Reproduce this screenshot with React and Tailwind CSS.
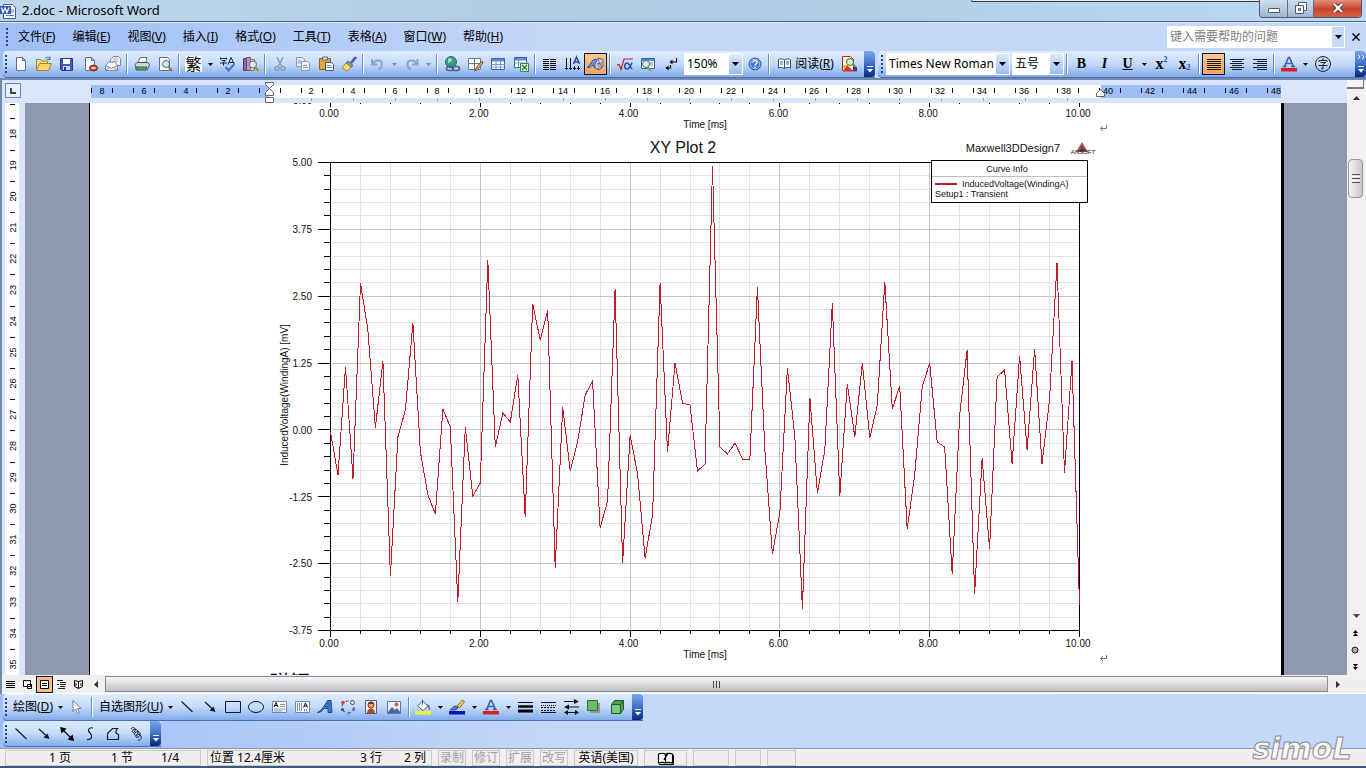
import React from "react";

const UI = "font-['Noto_Sans','Noto_Sans_CJK_SC',sans-serif]";

/* ---------- shared pieces ---------- */

function Icon({ children, className = "" }) {
  return (
    <svg width="18" height="18" viewBox="0 0 18 18" fill="none" className={"shrink-0 " + className} aria-hidden="true">
      {children}
    </svg>
  );
}

function Tool({ label, on, children }) {
  return (
    <button
      type="button"
      aria-label={label}
      aria-pressed={on}
      className={
        "flex h-[22px] w-[23px] shrink-0 items-center justify-center " +
        (on ? "border border-[#10104a] bg-gradient-to-b from-[#fbc98c] to-[#f0a75a]" : "")
      }
    >
      {children}
    </button>
  );
}

function Drop({ label, dim }) {
  return (
    <button type="button" aria-label={label} className="flex h-[22px] w-[11px] shrink-0 items-center justify-center">
      <svg width="5" height="3" viewBox="0 0 5 3" aria-hidden="true">
        <path d="M0 0h5L2.500 3z" fill={dim ? "#7f93b8" : "#000"} />
      </svg>
    </button>
  );
}

function Sep() {
  return (
    <span className="flex w-[6px] shrink-0 justify-center">
      <span className="h-5 w-px bg-[#6a8ccb]" />
      <span className="h-5 w-px bg-white" />
    </span>
  );
}

function Grip({ rows = 5 }) {
  return (
    <span className="flex w-[6px] shrink-0 flex-col items-center gap-[2px]">
      {Array.from({ length: rows }, (_, i) => (
        <span key={i} className="h-[2px] w-[2px] bg-[#27418a]" />
      ))}
    </span>
  );
}

function Cap({ label, more }) {
  return (
    <button
      type="button"
      aria-label={label}
      className="flex w-[11px] shrink-0 flex-col items-center justify-end self-stretch rounded-r-sm bg-gradient-to-b from-[#7ba6ee] via-[#3f6fc8] to-[#08287c] pb-1"
    >
      <svg width="8" height={more ? 19 : 7} viewBox={more ? "0 -12 8 19" : "0 0 8 7"} aria-hidden="true">
        {more && <path d="M1 -11l2 2-2 2M5 -11l2 2-2 2" stroke="#fff" fill="none" />}
        <path d="M1 .5h6" stroke="#fff" />
        <path d="M1 3h6L4 6.500z" fill="#fff" />
      </svg>
    </button>
  );
}

function Bar({ children, className = "" }) {
  return (
    <div
      className={
        "flex items-center rounded-l border-b border-[#4a70b8] bg-gradient-to-b from-[#dfecff] via-[#c3daf9] to-[#83abe9] " +
        className
      }
    >
      {children}
    </div>
  );
}

function Combo({ label, value, box }) {
  return (
    <span className={"flex h-[22px] shrink-0 bg-white " + box}>
      <select
        aria-label={label}
        className="min-w-0 flex-1 appearance-none overflow-hidden bg-white pl-[3px] text-xs text-black outline-none"
      >
        <option>{value}</option>
      </select>
      <span className="my-px mr-px flex w-[13px] shrink-0 items-center justify-center bg-gradient-to-b from-[#dce9fd] to-[#9dbff0]">
        <svg width="7" height="4" viewBox="0 0 7 4" aria-hidden="true">
          <path d="M0 0h7L3.500 4z" />
        </svg>
      </span>
    </span>
  );
}

/* ---------- icon drawings ---------- */

const page = <path d="M4.500 2.500h6l3 3v10h-9z M10.500 2.500v3h3" fill="#fff" stroke="#5c6f94" />;

const icons = {
  fresh: <Icon>{page}</Icon>,
  open: (
    <Icon>
      <path d="M1.500 15.500v-11h4l1 1.500h6v2" fill="#f7e08a" stroke="#a8842c" />
      <path d="M1.500 15.500l3-7h12l-3 7z" fill="#fbd768" stroke="#a8842c" />
      <path d="M10 3.500c2-2 4-1.500 5 .5m0-2.500v3h-3" stroke="#42618f" />
    </Icon>
  ),
  save: (
    <Icon>
      <path d="M2.500 3.500h12v12h-11l-1-1z" fill="#4659b8" stroke="#2b3a8f" />
      <path d="M5 4h7v5H5z" fill="#fff" />
      <path d="M5 11h7v4H5z" fill="#cfd6e8" />
      <path d="M6 12h2v3H6z" fill="#25307a" />
    </Icon>
  ),
  perm: (
    <Icon>
      {page}
      <ellipse cx="12.500" cy="13" rx="4" ry="3" fill="#c8452e" stroke="#8d2416" />
      <path d="M10.500 13h4" stroke="#fff" strokeWidth="1.500" />
    </Icon>
  ),
  mail: (
    <Icon>
      <path d="M6.500 7V4.500l3-3h5l2 2v7h-3" fill="#fff" stroke="#7a86a0" />
      <path d="M9 4h5M8.500 6h6" stroke="#9aa6bc" />
      <path d="M1.500 10.500l3-3.500h7l2 3.500v5h-12z" fill="#f2f4f8" stroke="#7a86a0" />
      <path d="M1.500 10.500l6 3 6-3M1.500 15.500l4-3M13.500 15.500l-4-3" stroke="#7a86a0" />
    </Icon>
  ),
  print: (
    <Icon>
      <path d="M5 8l2-5.500h7L12.500 8" fill="#fff" stroke="#5d6b80" />
      <path d="M2 9.500l2-2h11l1.500 2-2 5h-11z" fill="#cfd5dc" stroke="#46545f" />
      <path d="M3 12h11l-1 3H3z" fill="#4fa66a" stroke="#2f6a45" />
    </Icon>
  ),
  preview: (
    <Icon>
      <path d="M3.500 2.500h8l2 2v11h-10z" fill="#fff" stroke="#5c6f94" />
      <circle cx="10" cy="9" r="3.500" fill="#cfeaf5" stroke="#4c6a8c" />
      <path d="M12.500 12l3.500 4" stroke="#9a7a2c" strokeWidth="2" />
    </Icon>
  ),
  spell: (
    <Icon>
      <path d="M1 3.500h7M1.500 2.500v2M7.500 2.500v2M2.500 5.500h4l-2 1.500v3.500M1 8h7" stroke="#10204a" />
      <path d="M9 9.500l3-7 3.500 7M10 7.500h4.500" stroke="#10204a" />
      <path d="M6.500 12l3 3.500L15 9.500" stroke="#3c6fd0" strokeWidth="2" />
    </Icon>
  ),
  research: (
    <Icon>
      <path d="M1.500 3.500h3v12h-3z" fill="#8467b8" stroke="#4b3a80" />
      <path d="M4.500 2.500h4v13h-4z" fill="#c58ac0" stroke="#6a4a80" />
      <path d="M8.500 4.500h4v11h-4z" fill="#ecd795" stroke="#8d7a40" />
      <circle cx="11" cy="9.500" r="3.500" fill="#dceefa" stroke="#4c6a8c" />
      <path d="M13.500 12.500l3 3.500" stroke="#b8862c" strokeWidth="2" />
    </Icon>
  ),
  cut: (
    <Icon>
      <path d="M6 2l4.500 9M12 2L7.500 11" stroke="#8c9ab8" strokeWidth="1.500" />
      <circle cx="6" cy="13.500" r="2" stroke="#8c9ab8" strokeWidth="1.500" />
      <circle cx="12" cy="13.500" r="2" stroke="#8c9ab8" strokeWidth="1.500" />
    </Icon>
  ),
  copy: (
    <Icon>
      <path d="M2.500 2.500h6l2 2v7h-8z" fill="#e4ebf8" stroke="#8c9ab8" />
      <path d="M7.500 6.500h6l2 2v7h-8z" fill="#eef3fb" stroke="#8c9ab8" />
      <path d="M4 6h3M4 8h3M9 10.500h4M9 12.500h5" stroke="#8c9ab8" />
    </Icon>
  ),
  paste: (
    <Icon>
      <path d="M2.500 3.500h11v11h-11z" fill="#e0a83c" stroke="#8d6518" />
      <path d="M5.500 2h5v3h-5z" fill="#d9dde6" stroke="#5c6780" />
      <path d="M8.500 7.500h6l2 2v6h-8z" fill="#fff" stroke="#42558c" />
      <path d="M10 10.500h4M10 12.500h5" stroke="#6b86c0" />
    </Icon>
  ),
  brush: (
    <Icon>
      <path d="M16 2l-5 6" stroke="#5d4aa8" strokeWidth="2.500" />
      <path d="M8 6l5 4.500-2 1.500-5-4z" fill="#8f97a8" stroke="#535c70" />
      <path d="M6 8l5 4-4 4.500-5-4z" fill="#f6dc74" stroke="#a3832e" />
    </Icon>
  ),
  undo: (
    <Icon>
      <path d="M3 4v5.500h5.500M3.500 9C6 4.500 13 4 13 9.500c0 2.500-1.500 4-3.500 5" stroke="#8ba3d2" strokeWidth="2" />
    </Icon>
  ),
  redo: (
    <Icon>
      <path d="M14.500 4v5.500H9M14 9C11.500 4.500 4.500 4 4.500 9.500c0 2.500 1.500 4 3.500 5" stroke="#8ba3d2" strokeWidth="2" />
    </Icon>
  ),
  link: (
    <Icon>
      <circle cx="8" cy="7" r="5.500" fill="#3f9a82" stroke="#236b62" />
      <path d="M5 4c2-2 4-1 4 1s-4 2-4 4" fill="#a8dcb8" />
      <rect x="3.500" y="11.500" width="7" height="4" rx="2" stroke="#4a5f88" strokeWidth="1.500" />
      <rect x="9.500" y="11.500" width="7" height="4" rx="2" stroke="#4a5f88" strokeWidth="1.500" />
    </Icon>
  ),
  tables: (
    <Icon>
      <path d="M2.500 3.500h12v11h-12z M2.500 8.500h12M8.500 3.500v11" fill="#fff" stroke="#6a7890" />
      <path d="M16 6l-6 7-1.500 3 3-1.500L17 8z" fill="#e8a860" stroke="#7d5528" />
    </Icon>
  ),
  table: (
    <Icon>
      <path d="M2.500 3.500h13v11h-13z" fill="#fff" stroke="#3c62a8" />
      <path d="M3 4h12v2.500H3z" fill="#5c8ad8" />
      <path d="M2.500 9.500h13M2.500 12h13M7 6v8M11.500 6v8" stroke="#7d98c8" />
    </Icon>
  ),
  excel: (
    <Icon>
      <path d="M2.500 2.500h12v10h-12z" fill="#fff" stroke="#3c62a8" />
      <path d="M3 3h11v2.500H3z" fill="#5c8ad8" />
      <path d="M2.500 8h12M6.500 5v7" stroke="#7d98c8" />
      <path d="M8.500 8.500h8v8h-8z" fill="#d9f0d4" stroke="#2f8a3a" />
      <path d="M10 10l5 5M15 10l-5 5" stroke="#2f8a3a" strokeWidth="1.500" />
    </Icon>
  ),
  columns: (
    <Icon>
      <path d="M2 4.500h6M2 6.500h6M2 8.500h6M2 10.500h6M2 12.500h6M2 14.500h6M9 4.500h6M9 6.500h6M9 8.500h6M9 10.500h6M9 12.500h6M9 14.500h6" stroke="#111" />
    </Icon>
  ),
  vert: (
    <Icon>
      <path d="M2.500 3v12M6.500 3v12M10.500 11v4M14.500 11v4M1 13.500h3M5 13.500h3M9 13.500h3M13 13.500h3" stroke="#111" />
      <path d="M9.500 9l3-7 3 7M10.500 7h4" stroke="#24489a" strokeWidth="1.500" />
    </Icon>
  ),
  drawing: (
    <Icon>
      <path d="M0.500 12.500l6-8h3v8H7V10.500H5l-2 2z" fill="#6f8fe0" stroke="#3b4c96" />
      <path d="M8 9l3-6 5 1.500v7L12 15l-4-2z" fill="#d2d4e6" stroke="#585a80" />
      <path d="M11 3.500l1.500 5 3.500-1M12.500 8.500L12 15" stroke="#70729a" />
      <path d="M10 9a3 3 0 1 1 0 5" fill="#b8a4c8" stroke="#6a5a80" />
    </Icon>
  ),
  formula: (
    <Icon>
      <path d="M1 10l2-.5 2 5 3-10.500h9" stroke="#b8232c" strokeWidth="1.200" />
      <path d="M16 7.500c-1.500 4-3 6.500-5 6.500-3 0-3-6 0-6s3 6 5.500 6" stroke="#2b50a8" strokeWidth="1.600" />
    </Icon>
  ),
  docmap: (
    <Icon>
      <path d="M2.500 3.500h13v10h-13z" fill="#fff" stroke="#3c62a8" />
      <path d="M3 4h12v2H3z" fill="#5c8ad8" />
      <path d="M10 8h4M10 10h4" stroke="#6b86c0" />
      <circle cx="7" cy="9" r="3.500" fill="#d4efe0" stroke="#3d7a68" />
      <path d="M9 12l3 4" stroke="#b8862c" strokeWidth="2" />
    </Icon>
  ),
  marks: (
    <Icon>
      <path d="M14.500 3v4h-5" stroke="#000" strokeWidth="1.200" />
      <path d="M10.500 4.500L7.500 7l3 2.500z" fill="#000" />
      <path d="M8.500 10v3h-3" stroke="#000" strokeWidth="1.200" />
      <path d="M6.500 10.500L3.500 13l3 2.500z" fill="#000" />
    </Icon>
  ),
  help: (
    <Icon>
      <circle cx="9" cy="9" r="6" fill="#3f7ad8" stroke="#2a55a8" />
      <circle cx="9" cy="9" r="4.800" stroke="#c8dcf8" strokeWidth=".8" />
      <path d="M7 7.500c0-2.500 4-2.500 4 0 0 1.500-2 1.500-2 3M9 11.500v1.500" stroke="#fff" strokeWidth="1.400" />
    </Icon>
  ),
  book: (
    <Icon>
      <path d="M8.500 5C6.500 3.500 4 3.500 2.500 4.500v8.500c2-1 4-.5 6 .5 2-1 4-1.500 6-.5V4.500C13 3.500 10.500 3.500 8.500 5z M8.500 5v8.500" fill="#fff" stroke="#3a4f7c" />
      <path d="M4 7h3M4 9h3M10 7h3M10 9h3" stroke="#5a70a0" />
    </Icon>
  ),
  compose: (
    <Icon>
      <path d="M1.500 1.500h8l3 3v11h-11z" fill="#fff6c8" stroke="#a03028" />
      <path d="M2 16l4-6 5 5 5-1v2.500H2z" fill="#d8302a" />
      <circle cx="9" cy="7" r="3.500" fill="#d8f0d8" stroke="#3a6a4a" />
      <path d="M11.500 9l3 3" stroke="#a07828" strokeWidth="2" />
      <path d="M12 12h4v4h-4z" fill="#2b3ea0" />
      <path d="M2 10h3v3H2z" fill="#f0c020" />
    </Icon>
  ),
  justify: (
    <Icon>
      <path d="M2 4.500h14M2 6.500h14M2 8.500h14M2 10.500h14M2 12.500h14M2 14.500h14" stroke="#20140c" />
    </Icon>
  ),
  center: (
    <Icon>
      <path d="M2 4.500h14M4 6.500h10M2 8.500h14M4 10.500h10M2 12.500h14M4 14.500h10" stroke="#16202c" />
    </Icon>
  ),
  right: (
    <Icon>
      <path d="M2 4.500h14M6 6.500h10M2 8.500h14M6 10.500h10M2 12.500h14M6 14.500h10" stroke="#16202c" />
    </Icon>
  ),
  fontColor: (
    <Icon>
      <path d="M1 13h16v3.500H1z" fill="#dc1c20" />
      <path d="M4.500 11.500L8.500 2.500h1l4 9M6 8.500h6M3 11.500h3.500M11 11.500h4" stroke="#3a5ca8" strokeWidth="1.600" />
    </Icon>
  ),
  circled: (
    <Icon>
      <circle cx="9" cy="9" r="7.500" stroke="#222" />
      <path d="M9 3v2M5 7V5.500h8V7M6.500 7.500h5L9 9.500v4.500l-2-.5M4.500 10.500h9" stroke="#222" />
    </Icon>
  ),
  pointer: (
    <Icon>
      <path d="M5 2.500v11l2.500-2.500 2 4.500 2-1-2-4h3.500z" fill="#fff" stroke="#6a7ca0" />
    </Icon>
  ),
  line: (
    <Icon>
      <path d="M3.500 3.500l11 10.500" stroke="#111a30" strokeWidth="1.200" />
    </Icon>
  ),
  arrow: (
    <Icon>
      <path d="M4 4l7 6.500" stroke="#111a30" strokeWidth="1.200" />
      <path d="M14.500 14l-6-1.500 4-4z" fill="#111a30" />
    </Icon>
  ),
  dbl: (
    <Icon>
      <path d="M4 4l10 10" stroke="#000" strokeWidth="1.200" />
      <path d="M2 2l6.500 1.500-5 5zM16 16l-6.500-1.500 5-5z" fill="#000" />
    </Icon>
  ),
  rect: (
    <Icon>
      <path d="M1.500 3.500h15v11h-15z" stroke="#111a30" />
    </Icon>
  ),
  oval: (
    <Icon>
      <ellipse cx="9" cy="9" rx="7.500" ry="5.500" stroke="#111a30" />
    </Icon>
  ),
  textbox: (
    <Icon>
      <path d="M2.500 3.500h14v11h-14z" fill="#fff" stroke="#6f87b8" />
      <path d="M4 9l2-4.500L8 9M4.500 7.500h3" stroke="#111" />
      <path d="M10 6.500h5M10 8.500h5M4 11h11M4 13h8" stroke="#7f8ea8" />
    </Icon>
  ),
  vtextbox: (
    <Icon>
      <path d="M2.500 3.500h14v11h-14z" fill="#fff" stroke="#6f87b8" />
      <path d="M10.500 9.500l2-4.500 2 4.500M11 8h3" stroke="#111" />
      <path d="M4.500 5v8M6.500 5v8M8.500 5v8M11.500 11v2.500M13.500 11v2.500" stroke="#7f8ea8" />
    </Icon>
  ),
  wordart: (
    <Icon>
      <path d="M1.500 14.500C5 13.500 9 7 11.500 2.500h3.500l1 12h-4v-4H8c-1.500 2.500-3.500 4-6.500 4zM9.500 8.500H12v-3.500z" fill="#3f7ad0" stroke="#1f4c98" />
    </Icon>
  ),
  diagram: (
    <Icon>
      <circle cx="9" cy="9" r="6" stroke="#3a5c98" strokeDasharray="3 3.280" strokeWidth="1.200" />
      <circle cx="4" cy="4.500" r="1.800" fill="#d84030" />
      <circle cx="13.500" cy="4.500" r="2" fill="#fff" stroke="#444" />
      <circle cx="14.500" cy="11.500" r="1.600" fill="#4a70c8" />
      <circle cx="3.500" cy="11.500" r="1.600" fill="#555" />
      <circle cx="9" cy="15.500" r="1.300" fill="#5a9ad8" />
    </Icon>
  ),
  clip: (
    <Icon>
      <path d="M3.500 2.500h11v13h-11z" fill="#f7efe4" stroke="#4c5f88" />
      <circle cx="9" cy="7" r="3" fill="#e4a070" stroke="#7a3c1c" />
      <path d="M5 15c0-6 8-6 8 0z" fill="#b8452c" />
      <path d="M6 6c0-3 6-3 6 0z" fill="#6a341c" />
    </Icon>
  ),
  picture: (
    <Icon>
      <path d="M2.500 3.500h13v12h-13z" fill="#e8f0fc" stroke="#5c78b0" />
      <path d="M3 14l4-5 3 3 2-2 3.500 4.500v.5H3z" fill="#4a66a8" />
      <circle cx="11.500" cy="6.500" r="2" fill="#d86040" />
    </Icon>
  ),
  fill: (
    <Icon>
      <path d="M1 13h16v3.500H1z" fill="#f0f03c" />
      <path d="M3.500 8l5-5 5.500 5-5 4.500z" fill="#fff" stroke="#4c5f88" />
      <path d="M8.500 7V1.500" stroke="#4c5f88" />
      <path d="M13 6c3 1 3 3 3 6-1.500-.5-2-2-2-4z" fill="#4a70b8" />
    </Icon>
  ),
  pen: (
    <Icon>
      <path d="M1 13h16v3.500H1z" fill="#0414b8" />
      <path d="M2 12c2-1 3-4 6-4l2 2c-2 2.500-5 2-8 2z" fill="#5a7ac8" stroke="#2f4a8c" />
      <path d="M9 8l5.500-6 2 1.500-5 6.500z" fill="#f0cc58" stroke="#8d6a28" />
    </Icon>
  ),
  weights: (
    <Icon>
      <path d="M2 4.500h15" stroke="#000" />
      <path d="M2 8.500h15" stroke="#000" strokeWidth="2.500" />
      <path d="M2 13h15" stroke="#000" strokeWidth="3" />
    </Icon>
  ),
  dashes: (
    <Icon>
      <path d="M2 4.500h15M2 14.500h15" stroke="#111" />
      <path d="M2 7.500h15" stroke="#111" strokeDasharray="1 1" />
      <path d="M2 9.500h15M2 12.500h15" stroke="#111" strokeDasharray="2 1" />
    </Icon>
  ),
  arrows: (
    <Icon>
      <path d="M2 3.500h11M5 9h12M5 14.500h9" stroke="#111" strokeWidth="1.200" />
      <path d="M12 1l5 2.500-5 2.500zM7 6.500L2 9l5 2.500zM6 12l-4 2.500 4 2.500zM13 12l4 2.500-4 2.500z" fill="#111" />
    </Icon>
  ),
  shadow: (
    <Icon>
      <path d="M5 5h10v10H5z" fill="#8a9c94" />
      <path d="M2.500 2.500h10v10h-10z" fill="#6cba68" stroke="#2f7038" />
    </Icon>
  ),
  cube: (
    <Icon>
      <path d="M3.500 6.500l3-4h9v9l-3 4h-9z" fill="#4f9c4c" stroke="#235c2a" />
      <path d="M3.500 6.500h9v9h-9z" fill="#7cc878" stroke="#235c2a" />
      <path d="M12.500 6.500l3-4" stroke="#235c2a" />
    </Icon>
  ),
  curve: (
    <Icon>
      <path d="M12 3C8 2 6 5 9 8s2 7-3 6.500" stroke="#111a30" strokeWidth="1.200" />
    </Icon>
  ),
  freeform: (
    <Icon>
      <path d="M3.500 14.500v-6l5-5h5c-3 3-2 5 1 6v5z" stroke="#111a30" strokeWidth="1.200" />
    </Icon>
  ),
  scribble: (
    <Icon>
      <path d="M4 4c2-3 5-1 4 2s-4 1-2-1 6 0 5 3-5 3-3 0 6-1 5 2-5 3-4 1 4-2 5 0-1 5-3 4" stroke="#111a30" />
    </Icon>
  ),
};

/* ---------- window frame ---------- */

function TitleBar() {
  return (
    <header className="relative flex h-[22px] shrink-0 items-center border-b border-[#4d6582] bg-gradient-to-r from-[#bdd8ee] via-[#adcbe4] to-[#bcd9f2]">
      <svg width="16" height="18" viewBox="0 0 16 18" className="mr-[6px] shrink-0" aria-hidden="true">
        <path d="M3.500 2.500h9l3 3v11h-12z" fill="#fff" stroke="#40598c" />
        <path d="M11 8h3M11 10h3M6 13.500h8" stroke="#5a7ac0" />
        <path d="M0 4h11v8H0z" fill="#2f5db0" />
        <path d="M1.500 5.500l1.500 5 2-4.500 2 4.500 2-5" stroke="#fff" strokeWidth="1.300" fill="none" />
      </svg>
      <h1 className="text-[13px] text-black">2.doc - Microsoft Word</h1>
      <div className="absolute right-[97px] top-0 h-[2px] w-[298px] rounded-b border border-t-0 border-[#2e3a44] bg-[#e6ecec]" />
      <div className="absolute right-1 top-0 flex h-[18px] overflow-hidden rounded-b border border-t-0 border-[#46586c]">
        <button type="button" aria-label="最小化" className="flex w-7 items-end justify-center border-r border-[#5d7088] bg-gradient-to-b from-[#cfdfee] to-[#9db7cf] pb-1">
          <svg width="12" height="5" viewBox="0 0 12 5" aria-hidden="true">
            <path d="M.5 .5h11v4H.5z" fill="#fff" stroke="#4c5c70" />
          </svg>
        </button>
        <button type="button" aria-label="还原" className="flex w-[26px] items-center justify-center border-r border-[#5d7088] bg-gradient-to-b from-[#cfdfee] to-[#9db7cf] pb-[2px]">
          <svg width="12" height="12" viewBox="0 0 12 12" aria-hidden="true">
            <path d="M3.500 .5h8v8h-8z" fill="#fff" stroke="#4c5c70" />
            <path d="M.5 3.500h8v8h-8z" fill="#fff" stroke="#4c5c70" />
            <path d="M3.500 6.500h2v2h-2z" fill="#aac0d4" stroke="#4c5c70" />
          </svg>
        </button>
        <button type="button" aria-label="关闭" className="flex w-[47px] items-center justify-center bg-gradient-to-b from-[#e0907c] via-[#c8432c] to-[#d4604a] pb-[2px]">
          <svg width="12" height="10" viewBox="0 0 12 10" aria-hidden="true">
            <path d="M2 1l8 8M10 1L2 9" stroke="#4a3038" strokeWidth="4" />
            <path d="M2 1l8 8M10 1L2 9" stroke="#fff" strokeWidth="2.400" />
          </svg>
        </button>
      </div>
    </header>
  );
}

const menus = [
  ["文件", "F"],
  ["编辑", "E"],
  ["视图", "V"],
  ["插入", "I"],
  ["格式", "O"],
  ["工具", "T"],
  ["表格", "A"],
  ["窗口", "W"],
  ["帮助", "H"],
];

function MenuBar() {
  return (
    <div className="flex h-[29px] shrink-0 items-center border-t border-[#dfeafc] pr-1">
      <div className="pl-1">
        <Grip />
      </div>
      <nav className="flex flex-1 gap-px">
        {menus.map(([name, key]) => (
          <button key={key} type="button" className="px-2 text-xs">
            {name}(<u>{key}</u>)
          </button>
        ))}
      </nav>
      <div className="flex h-[22px] w-[178px] bg-white">
        <input
          aria-label="帮助"
          placeholder="键入需要帮助的问题"
          className="min-w-0 flex-1 bg-white pl-[3px] text-xs outline-none placeholder:text-[#808080]"
        />
        <button type="button" aria-label="最近的问题" className="flex w-[14px] items-center justify-center border border-white bg-[#c4d8f8]">
          <svg width="7" height="4" viewBox="0 0 7 4" aria-hidden="true">
            <path d="M0 0h7L3.500 4z" />
          </svg>
        </button>
      </div>
      <button type="button" aria-label="关闭窗口" className="ml-[5px] flex w-3 justify-center">
        <svg width="8" height="8" viewBox="0 0 8 8" aria-hidden="true">
          <path d="M.5 .5l7 7M7.500 .5l-7 7" stroke="#000" strokeWidth="1.500" />
        </svg>
      </button>
    </div>
  );
}

function TopToolbars() {
  return (
    <div className="flex h-[27px] shrink-0">
      <Bar className="ml-[3px] w-[872px]">
        <Grip />
        <Tool label="新建">{icons.fresh}</Tool>
        <Tool label="打开">{icons.open}</Tool>
        <Tool label="保存">{icons.save}</Tool>
        <Tool label="权限">{icons.perm}</Tool>
        <Tool label="电子邮件">{icons.mail}</Tool>
        <Sep />
        <Tool label="打印">{icons.print}</Tool>
        <Tool label="打印预览">{icons.preview}</Tool>
        <Sep />
        <button type="button" className="flex h-[22px] w-[23px] shrink-0 items-center justify-center text-base leading-none">
          <span className="bg-white">繁</span>
        </button>
        <Drop label="中文转换" />
        <Tool label="拼写和语法">{icons.spell}</Tool>
        <Tool label="信息检索">{icons.research}</Tool>
        <Sep />
        <Tool label="剪切">{icons.cut}</Tool>
        <Tool label="复制">{icons.copy}</Tool>
        <Tool label="粘贴">{icons.paste}</Tool>
        <Tool label="格式刷">{icons.brush}</Tool>
        <Sep />
        <Tool label="撤消">{icons.undo}</Tool>
        <Drop label="撤消列表" dim />
        <Tool label="恢复">{icons.redo}</Tool>
        <Drop label="恢复列表" dim />
        <Sep />
        <Tool label="超链接">{icons.link}</Tool>
        <Tool label="表格和边框">{icons.tables}</Tool>
        <Tool label="插入表格">{icons.table}</Tool>
        <Tool label="插入工作表">{icons.excel}</Tool>
        <Sep />
        <Tool label="分栏">{icons.columns}</Tool>
        <Tool label="更改文字方向">{icons.vert}</Tool>
        <Tool label="绘图" on>{icons.drawing}</Tool>
        <Sep />
        <Tool label="公式">{icons.formula}</Tool>
        <Tool label="文档结构图">{icons.docmap}</Tool>
        <Tool label="显示编辑标记">{icons.marks}</Tool>
        <Combo label="显示比例" value="150%" box="ml-[2px] w-[59px]" />
        <Tool label="帮助主题">{icons.help}</Tool>
        <Sep />
        <button type="button" className="flex h-[22px] w-[66px] shrink-0 items-center justify-center gap-px text-xs">
          {icons.book}
          <span className="whitespace-nowrap">
            阅读(<u>R</u>)
          </span>
        </button>
        <Tool label="撰写">{icons.compose}</Tool>
        <span className="flex-1" />
        <Cap label="常用工具栏选项" />
      </Bar>
      <Bar className="ml-[3px] flex-1 pl-px">
        <Grip />
        <Combo label="字体" value="Times New Roman" box="ml-px w-[124px]" />
        <span className="w-[2px] shrink-0" />
        <Combo label="字号" value="五号" box="w-[52px]" />
        <Sep />
        <Tool label="加粗">
          <b className="font-['Liberation_Serif',serif] text-sm">B</b>
        </Tool>
        <Tool label="倾斜">
          <b className="font-['Liberation_Serif',serif] text-sm italic">I</b>
        </Tool>
        <Tool label="下划线">
          <b className="font-['Liberation_Serif',serif] text-sm underline">U</b>
        </Tool>
        <Drop label="下划线样式" />
        <Tool label="上标">
          <span className="flex h-[18px] items-center font-['Liberation_Serif',serif] text-base font-bold">
            x<span className="self-start text-[8px] leading-[10px] text-[#24489a]">2</span>
          </span>
        </Tool>
        <Tool label="下标">
          <span className="flex h-[18px] items-center font-['Liberation_Serif',serif] text-base font-bold">
            x<span className="self-end text-[8px] leading-[10px] text-[#24489a]">2</span>
          </span>
        </Tool>
        <Sep />
        <Tool label="两端对齐" on>{icons.justify}</Tool>
        <Tool label="居中">{icons.center}</Tool>
        <Tool label="右对齐">{icons.right}</Tool>
        <Sep />
        <Tool label="字体颜色">{icons.fontColor}</Tool>
        <Drop label="字体颜色列表" />
        <Tool label="带圈字符">{icons.circled}</Tool>
        <span className="flex-1" />
        <Cap label="格式工具栏选项" more />
      </Bar>
    </div>
  );
}

/* ---------- rulers ---------- */

const RULER_STEP = 42;
const ORIGIN = 269;

function HRuler() {
  const right = Array.from({ length: 24 }, (_, i) => i + 1);
  const left = [1, 2, 3, 4];
  const ticks = Array.from({ length: 57 }, (_, i) => 91.5 + i * 21);
  return (
    <svg width="1190" height="23" viewBox="91 80 1190 23" className="ml-[70px] shrink-0" role="img" aria-label="水平标尺">
      <path d="M91 85h1190v13H91z" fill="#9dbdf5" />
      <path d="M269 85h832v13H269z" fill="#fff" />
      {ticks.map((x) => (
        <path key={x} d={`M${x} 88v5`} stroke="#111" />
      ))}
      <g className="font-['Liberation_Sans',sans-serif] text-[9px]" textAnchor="middle" fill="#000">
        {left.map((n) => (
          <text key={n} x={ORIGIN - n * RULER_STEP + 1} y="94">
            {n * 2}
          </text>
        ))}
        {right.map((n) => (
          <text key={n} x={ORIGIN + n * RULER_STEP - (n > 12 ? 1 : 0)} y="94">
            {n * 2}
          </text>
        ))}
      </g>
      {right.slice(0, 19).map((n) => (
        <path key={n} d={`M${ORIGIN + n * RULER_STEP + 0.5} 98v3`} stroke="#8ea4c8" />
      ))}
      <path d="M265.500 82.500h8v2l-4 4 4 4v3h-8v-3l4-4-4-4zM265.500 97.500h8v5h-8z" fill="#fff" stroke="#5c6880" />
      <path d="M1096.500 96.500v-3l4-4 4 4v3z" fill="#fff" stroke="#5c6880" />
    </svg>
  );
}

function VRuler() {
  const nums = Array.from({ length: 18 }, (_, i) => i + 18);
  return (
    <svg width="14" height="572" viewBox="5 103 14 572" className="ml-[3px] shrink-0 bg-white" role="img" aria-label="垂直标尺">
      <path d="M10 104.500h5" stroke="#111" />
      <g className="font-['Liberation_Sans',sans-serif] text-[9px]" textAnchor="middle" fill="#000">
        {nums.map((n, i) => {
          const y = 134 + i * 31.2;
          return (
            <g key={n}>
              <text transform={`translate(16 ${y}) rotate(-90)`}>{n}</text>
              <path d={`M10 ${Math.round(y - 15.600) + 0.5}h5`} stroke="#111" />
            </g>
          );
        })}
      </g>
    </svg>
  );
}

/* ---------- chart ---------- */

/* Curve samples every 0.1 ms, as heights in the chart's drawing units. */
const samples = [
  432, 475, 367, 479, 283, 330, 428, 361, 576, 437, 410, 323, 452, 495, 514, 409, 427, 602, 427, 496, 483, 260, 447, 413,
  422, 375, 517, 304, 340, 310, 568, 407, 471, 441, 395, 381, 528, 501, 289, 563, 435, 474, 558, 515, 283, 452, 363, 403,
  405, 471, 464, 166, 447, 454, 443, 459, 459, 287, 450, 554, 512, 368, 437, 609, 398, 493, 450, 303, 496, 384, 437, 363,
  438, 405, 282, 409, 386, 529, 475, 387, 363, 442, 447, 574, 415, 350, 594, 458, 549, 377, 370, 464, 356, 450, 349, 464,
  400, 263, 473, 361, 605,
];

const px = (v) => Math.round(v) + 0.5;
const X0 = 330;
const Y0 = 162;
const W = 749;
const H = 468;

function Chart() {
  const cols = Array.from({ length: 26 }, (_, i) => ({ x: px(X0 + (i * W) / 25), major: i % 5 === 0, n: i }));
  const rows = Array.from({ length: 36 }, (_, i) => ({ y: px(Y0 + (i * H) / 35), major: i % 5 === 0, n: i }));
  const points = samples.map((y, i) => `${(X0 + 0.5 + (i * W) / 100).toFixed(1)},${y}`).join(" ");
  return (
    <svg width="840" height="562" viewBox="270 103 840 562" className="block shrink-0 font-['Liberation_Sans',sans-serif]" role="img" aria-label="XY Plot 2">
      {cols.map(({ x, major, n }) => (
        <path key={n} d={`M${x} 103v${major ? 4 : 1}`} stroke="#000" />
      ))}
      <g className="text-[10px]" textAnchor="middle" fill="#111">
        {["0.00", "2.00", "4.00", "6.00", "8.00", "10.00"].map((t, i) => (
          <React.Fragment key={t}>
            <text x={329 + i * 149.8} y="117">{t}</text>
            <text x={329 + i * 149.8} y="647">{t}</text>
          </React.Fragment>
        ))}
      </g>
      <text className="text-[10px]" fill="#111" x="301" y="103.500" textAnchor="middle">-5.00</text>
      <g className="text-[10px]" textAnchor="middle" fill="#111">
        <text x="705" y="128">Time [ms]</text>
        <text x="705" y="658">Time [ms]</text>
      </g>
      <text className="text-base" x="683" y="153" textAnchor="middle" fill="#111">XY Plot 2</text>
      <text className="text-[11px]" x="1060" y="152" textAnchor="end" fill="#111">Maxwell3DDesign7</text>
      <path d="M1082 142l-6 10h12z" fill="#b05050" />
      <path d="M1082 146v6M1079 150h6" stroke="#333" />
      <text className="text-[6px]" x="1083" y="154" textAnchor="middle" fill="#111">ANSOFT</text>

      {cols.map(({ x, n, major }) => !major && <path key={n} d={`M${x} 162v468`} stroke="#e2e2e2" />)}
      {rows.map(({ y, n, major }) => !major && <path key={n} d={`M330 ${y}h749`} stroke="#e2e2e2" />)}
      {cols.map(({ x, n, major }) => major && <path key={n} d={`M${x} 162v468`} stroke="#c4c4c4" />)}
      {rows.map(({ y, n, major }) => major && <path key={n} d={`M330 ${y}h749`} stroke="#c4c4c4" />)}
      {cols.map(({ x, n, major }) => (
        <path key={n} d={`M${x} 631v${major ? 6 : 3}`} stroke="#000" />
      ))}
      {rows.map(({ y, n, major }) => (
        <path key={n} d={`M${major ? 318 : 324} ${y}H330`} stroke="#000" />
      ))}
      <path d="M330.500 162.500h749v468h-749z" fill="none" stroke="#000" />
      <g className="text-[10px]" textAnchor="end" fill="#111">
        {["5.00", "3.75", "2.50", "1.25", "0.00", "-1.25", "-2.50", "-3.75"].map((t, i) => (
          <text key={t} x="312" y={166 + Math.round(i * 66.900)}>{t}</text>
        ))}
      </g>
      <text className="text-[10px]" transform="translate(288 395) rotate(-90)" textAnchor="middle" fill="#111">
        InducedVoltage(WindingA) [mV]
      </text>
      <polyline points={points} fill="none" stroke="#c01c24" strokeWidth="1" shapeRendering="crispEdges" />

      <path d="M931.500 160.500h156v42h-156z" fill="#fff" stroke="#000" />
      <path d="M932 176.500h155" stroke="#bdbdbd" />
      <path d="M935 184h22" stroke="#b81c2c" strokeWidth="2" />
      <g className="text-[9px]" fill="#111">
        <text x="1007" y="172" textAnchor="middle">Curve Info</text>
        <text x="962" y="187">InducedVoltage(WindingA)</text>
        <text x="935" y="197">Setup1 : Transient</text>
      </g>
      <path d="M1106.500 125v3.500h-6M1103 126l-2.500 2.500 2.500 2.500M1106.500 655v3.500h-6M1103 656l-2.500 2.500 2.500 2.500" stroke="#777" fill="none" />
    </svg>
  );
}

/* ---------- scroll bars ---------- */

function VScroll() {
  return (
    <div className="flex w-[19px] shrink-0 flex-col items-start bg-[#f0f0f0] pl-px">
      <div className="mt-[56px] flex h-[39px] w-[15px] flex-col items-center justify-center gap-px rounded-sm border border-[#989898] bg-gradient-to-r from-[#f4f4f4] to-[#c8c8cc]">
        <span className="h-px w-2 bg-[#555]" />
        <span className="h-px w-2 bg-white" />
        <span className="h-px w-2 bg-[#555]" />
        <span className="h-px w-2 bg-white" />
        <span className="h-px w-2 bg-[#555]" />
      </div>
      <span className="flex-1" />
      <button type="button" aria-label="向下滚动" className="flex h-4 w-4 items-center justify-center">
        <svg width="7" height="4" viewBox="0 0 7 4" aria-hidden="true"><path d="M0 0h7L3.500 4z" fill="#444" /></svg>
      </button>
      <button type="button" aria-label="上一页" className="flex h-[17px] w-[14px] items-center justify-center">
        <svg width="5" height="6" viewBox="0 0 5 6" aria-hidden="true"><path d="M2.500 0L5 3H0zM2.500 3L5 6H0z" /></svg>
      </button>
      <button type="button" aria-label="选择浏览对象" className="flex h-[17px] w-[14px] items-center justify-center">
        <svg width="8" height="8" viewBox="0 0 8 8" aria-hidden="true"><circle cx="4" cy="4" r="3" fill="#aaa" stroke="#222" /></svg>
      </button>
      <button type="button" aria-label="下一页" className="flex h-[17px] w-[14px] items-center justify-center">
        <svg width="5" height="6" viewBox="0 0 5 6" aria-hidden="true"><path d="M2.500 6L5 3H0zM2.500 3L5 0H0z" /></svg>
      </button>
    </div>
  );
}

const views = [
  ["普通视图", <path d="M1 2.500h9M1 4.500h9M1 6.500h9M1 8.500h9" stroke="#000" />],
  ["Web 版式", <path d="M1.500 1.500h7v6h-7zM5.500 5.500h4v4h-4z" stroke="#000" fill="#fff" />],
  ["页面视图", <path d="M1.500 1.500h8v8h-8zM3 4.500h5M3 6.500h5" stroke="#000" fill="#fff" />],
  ["大纲视图", <path d="M1 1.500h6M4 3.500h6M1 5.500h2M4 5.500h6M4 7.500h5M2 9.500h7" stroke="#222" />],
  ["阅读版式", <path d="M5.500 2.500l-4-1v6l4 2 4-2v-6zM5.500 2.500v7M3 4v3M8 4v3" stroke="#000" fill="#fff" />],
];

function HScroll() {
  return (
    <div className="flex h-[19px] shrink-0 items-center border-b border-white bg-[#efefee]">
      {views.map(([label, shape], i) => (
        <button
          key={label}
          type="button"
          aria-label={label}
          className={
            "flex h-[17px] w-[17px] items-center justify-center " + (i === 2 ? "border border-[#10104a] bg-[#f8bd80]" : "")
          }
        >
          <svg width="11" height="11" viewBox="0 0 11 11" fill="none" aria-hidden="true">{shape}</svg>
        </button>
      ))}
      <button type="button" aria-label="向左滚动" className="flex w-[18px] items-center justify-center">
        <svg width="4" height="7" viewBox="0 0 4 7" aria-hidden="true"><path d="M4 0v7L0 3.500z" fill="#333" /></svg>
      </button>
      <div className="flex h-4 flex-1 items-center justify-center gap-[2px] border border-[#8c8c90] bg-gradient-to-b from-[#f6f6f6] via-[#dcdce0] to-[#c0c0c4]">
        <span className="h-[7px] w-px bg-[#444]" />
        <span className="h-[7px] w-px bg-[#444]" />
        <span className="h-[7px] w-px bg-[#444]" />
      </div>
      <button type="button" aria-label="向右滚动" className="mr-[18px] flex w-5 items-center justify-center">
        <svg width="4" height="7" viewBox="0 0 4 7" aria-hidden="true"><path d="M0 0v7l4-3.500z" fill="#333" /></svg>
      </button>
    </div>
  );
}

/* ---------- bottom ---------- */

function BottomToolbars() {
  return (
    <>
      <div className="flex h-[27px] shrink-0">
        <Bar className="ml-[3px] w-[640px]">
          <Grip />
          <button type="button" className="whitespace-nowrap pl-1 pr-[2px] text-xs">
            绘图(<u>D</u>)
          </button>
          <Drop label="绘图菜单" />
          <Tool label="选择对象">{icons.pointer}</Tool>
          <Sep />
          <button type="button" className="whitespace-nowrap pl-1 pr-[2px] text-xs">
            自选图形(<u>U</u>)
          </button>
          <Drop label="自选图形菜单" />
          <Tool label="直线">{icons.line}</Tool>
          <Tool label="箭头">{icons.arrow}</Tool>
          <Tool label="矩形">{icons.rect}</Tool>
          <Tool label="椭圆">{icons.oval}</Tool>
          <Tool label="文本框">{icons.textbox}</Tool>
          <Tool label="竖排文本框">{icons.vtextbox}</Tool>
          <Tool label="艺术字">{icons.wordart}</Tool>
          <Tool label="组织结构图">{icons.diagram}</Tool>
          <Tool label="剪贴画">{icons.clip}</Tool>
          <Tool label="图片">{icons.picture}</Tool>
          <Sep />
          <Tool label="填充颜色">{icons.fill}</Tool>
          <Drop label="填充颜色列表" />
          <Tool label="线条颜色">{icons.pen}</Tool>
          <Drop label="线条颜色列表" />
          <Tool label="文字颜色">{icons.fontColor}</Tool>
          <Drop label="文字颜色列表" />
          <Tool label="线型">{icons.weights}</Tool>
          <Tool label="虚线线型">{icons.dashes}</Tool>
          <Tool label="箭头样式">{icons.arrows}</Tool>
          <Tool label="阴影样式">{icons.shadow}</Tool>
          <Tool label="三维效果样式">{icons.cube}</Tool>
          <span className="flex-1" />
          <Cap label="绘图工具栏选项" />
        </Bar>
      </div>
      <div className="flex h-[27px] shrink-0 pb-px">
        <Bar className="ml-[3px] w-[158px]">
          <Grip />
          <Tool label="线条">{icons.line}</Tool>
          <Tool label="单箭头">{icons.arrow}</Tool>
          <Tool label="双箭头">{icons.dbl}</Tool>
          <Tool label="曲线">{icons.curve}</Tool>
          <Tool label="任意多边形">{icons.freeform}</Tool>
          <Tool label="自由曲线">{icons.scribble}</Tool>
          <span className="flex-1" />
          <Cap label="线条工具栏选项" />
        </Bar>
      </div>
    </>
  );
}

const cell = "flex h-4 shrink-0 items-center border border-[#c9c9c7]";

function StatusBar() {
  return (
    <footer className="relative flex h-5 shrink-0 items-center gap-[6px] border-b-2 border-t border-b-[#40587c] border-t-[#8d98a8] bg-[#f0efee] pl-[5px] text-xs">
      <span className={cell + " w-[196px] pl-[43px]"}>
        <span className="w-[62px]">1 页</span>
        <span className="w-[50px]">1 节</span>
        <span>1/4</span>
      </span>
      <span className={cell + " w-[225px] justify-between pl-[2px] pr-[5px]"}>
        <span className="flex-1">位置 12.4厘米</span>
        <span className="w-[44px]">3 行</span>
        <span>2 列</span>
      </span>
      {["录制", "修订", "扩展", "改写"].map((t) => (
        <span key={t} className={cell + " w-7 justify-center whitespace-nowrap text-[#a0a0a0]"}>{t}</span>
      ))}
      <span className={cell + " w-[64px] justify-center whitespace-nowrap"}>英语(美国)</span>
      <span className={cell + " w-[43px] justify-center"}>
        <svg width="18" height="14" viewBox="0 0 18 14" fill="none" aria-hidden="true">
          <path d="M8.500 3.500C6 1.500 4 2 1.500 3v9c3-1 5-1 7 0 2-1 4-1 7 0V3c-3-1-5-1-7 .5zM8.500 3.500V12" fill="#fff" stroke="#000" strokeWidth="1.200" />
          <path d="M2 13.500h14.500V4" stroke="#000" />
          <path d="M7 9l4-7" stroke="#000" strokeWidth="1.500" />
        </svg>
      </span>
      <span className={cell + " w-9"} />
      <span className={cell + " w-[26px]"} />
      <span className={cell + " w-[29px]"} />
      <svg width="128" height="36" viewBox="0 0 128 36" className="absolute bottom-0 right-0" role="img" aria-label="simol">
        <text x="64" y="29" textAnchor="middle" fill="#f6f6f6" stroke="#8b8b8b" strokeWidth="1" className="font-['DejaVu_Sans',sans-serif] text-[30px] font-bold italic">
          simoL
        </text>
      </svg>
    </footer>
  );
}

export default function App() {
  return (
    <div className={"flex h-screen flex-col overflow-hidden bg-gradient-to-r from-[#9ebef5] via-[#c3d7f8] via-40% to-[#c4d9f9] leading-none text-black " + UI}>
      <TitleBar />
      <MenuBar />
      <TopToolbars />
      <main className="flex min-h-0 flex-1 flex-col border-l-2 border-t-2 border-[#7288ac]">
        <div className="flex h-[23px] shrink-0 bg-[#d8e5fa]">
          <button type="button" aria-label="制表符" className="ml-[3px] mt-[3px] flex h-[15px] w-4 shrink-0 items-center justify-center border border-[#6a86b8] bg-[#e6effc]">
            <svg width="6" height="6" viewBox="0 0 6 6" aria-hidden="true"><path d="M1 0v5h5" stroke="#444" strokeWidth="2" fill="none" /></svg>
          </button>
          <div className="min-w-0 flex-1 overflow-hidden">
            <HRuler />
          </div>
          <div className="flex w-[19px] shrink-0 flex-col items-start bg-[#f0f0f0]">
            <span className="h-[9px] w-[17px] border-b-2 border-r border-[#777] bg-[#f4f4f4]" />
            <button type="button" aria-label="向上滚动" className="flex flex-1 items-center pl-[6px] pt-1">
              <svg width="7" height="4" viewBox="0 0 7 4" aria-hidden="true"><path d="M0 4h7L3.500 0z" fill="#333" /></svg>
            </button>
          </div>
        </div>
        <div className="flex min-h-0 flex-1 bg-[#d8e5fa]">
          <VRuler />
          <div className="ml-[6px] flex min-w-0 flex-1 overflow-hidden bg-[#9098ae] pl-[64px]">
            <article className="min-w-0 flex-1 overflow-hidden border-l border-r-[3px] border-black bg-white pl-[180px]">
              <Chart />
              <p className="pt-1 text-xl">磁钢</p>
            </article>
            <div className="w-[63px] shrink-0" />
          </div>
          <VScroll />
        </div>
        <HScroll />
      </main>
      <BottomToolbars />
      <StatusBar />
    </div>
  );
}
